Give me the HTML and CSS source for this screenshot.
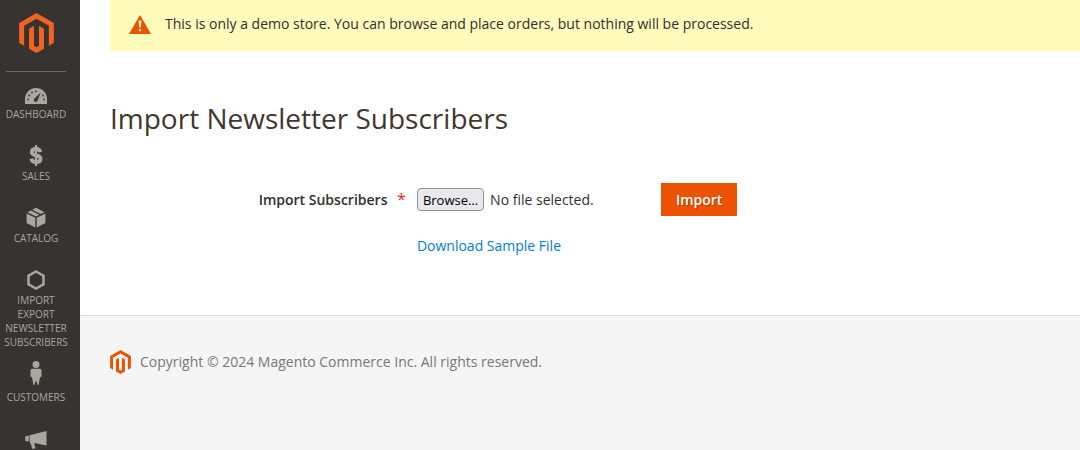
FILE: index.html
```html
<!DOCTYPE html>
<html lang="en">
<head>
  <meta charset="UTF-8">
  <meta name="viewport" content="width=device-width, initial-scale=1.0">
  <title>Import Newsletter Subscribers / Magento Admin</title>
  <link rel="stylesheet" href="styles.css">
</head>
<body>
  <!-- Sidebar -->
  <aside class="sidebar">
    <a class="logo" href="#" aria-label="Magento Admin Panel">
      <svg width="35" height="40" viewBox="1.6 0 20.8 24"><path d="M12 24l-4.455-2.572v-12l2.97-1.715v12.001l1.485.902 1.485-.902V7.713l2.971 1.715v12L12 24zM22.391 6v12l-2.969 1.714V7.713L12 3.43 4.574 7.713v12.001L1.609 18V6L12 0l10.391 6z"/></svg>
    </a>
    <nav class="menu">
      <a class="menu-item" href="#">
        <span class="menu-icon">
          <svg width="22" height="16" viewBox="0 0 22 16">
            <path d="M0 16V11a11 11 0 0 1 22 0v5z"/>
            <g class="cut"><path d="M15.8 4.2l-3.2 8.100a1.900 1.900 0 1 1-2.700-2.100z"/><circle cx="3" cy="11.500" r=".9"/><circle cx="4.200" cy="7.500" r=".9"/><circle cx="7" cy="4.500" r=".9"/><circle cx="11" cy="3.300" r=".9"/><circle cx="18" cy="7.500" r=".9"/><circle cx="19" cy="11.500" r=".9"/></g>
          </svg>
        </span>
        <span>Dashboard</span>
      </a>
      <a class="menu-item" href="#">
        <span class="menu-icon">
          <svg width="14" height="21" viewBox="0 0 14 22"><path class="stroke" d="M11.500 7.500C11 5.200 9.200 4.200 7 4.200c-2.600 0-4.400 1.300-4.400 3.300C2.600 12 11.800 9.700 11.800 14.300c0 2.100-1.800 3.500-4.700 3.500-2.700 0-4.600-1.200-5.100-3.600"/><path d="M5.800 0h2.400v22H5.800z"/></svg>
        </span>
        <span>Sales</span>
      </a>
      <a class="menu-item" href="#">
        <span class="menu-icon">
          <svg width="20" height="21" viewBox="0 0 20 21"><path d="M.6 6.500l8.700 4.200v9.800L.6 16zM19.400 6.500v9.500l-8.700 4.500v-9.800zM1.500 5.200l3.300-1.700 8.600 4.200L10 9.400zM6.300 2.700L10 .8l8.500 4.400-3.600 1.800z"/></svg>
        </span>
        <span>Catalog</span>
      </a>
      <a class="menu-item" href="#">
        <span class="menu-icon">
          <svg width="18" height="20" viewBox="0 0 18 20"><path class="hexagon" d="M9 1.500l7.500 4.200v8.600L9 18.500l-7.500-4.200V5.700z"/></svg>
        </span>
        <span>Import Export Newsletter Subscribers</span>
      </a>
      <a class="menu-item" href="#">
        <span class="menu-icon">
          <svg class="tall" width="12" height="24" viewBox="0 0 12 24"><circle cx="6" cy="3.500" r="3.500"/><path d="M2.500 7.700h7c1.300 0 2 .8 2 2v5.600l-1.600 1.400L8.600 24h-.8L6 19.500 4.200 24h-.8L2.100 16.700.5 15.300V9.700c0-1.200.7-2 2-2z"/></svg>
        </span>
        <span>Customers</span>
      </a>
      <a class="menu-item" href="#" aria-label="Marketing">
        <span class="menu-icon">
          <svg width="22" height="18" viewBox="0 0 22 18"><path d="M.3 5.300l3.400-.9v6.200L.3 10zM4.500 4.200L21.500 0v14.500L9.200 12l1.200 5.200-3 .8-2.200-6.500-.7-.2z"/></svg>
        </span>
      </a>
    </nav>
  </aside>

  <div class="page">
    <div class="message">
      <svg width="22" height="19" viewBox="0 0 22 19"><path class="triangle" d="M11 0l11 19H0z"/><path class="mark" d="M9.600 5.500h2.800l-.6 7h-1.600zM9.900 14h2.200v2.200H9.900z"/></svg>
      <span>This is only a demo store. You can browse and place orders, but nothing will be processed.</span>
    </div>

    <main class="content">
      <h1>Import Newsletter Subscribers</h1>

      <form class="import-form">
        <label class="field-label" for="import-file">Import Subscribers <span class="required">*</span></label>
        <div class="file-field">
          <input type="file" id="import-file" class="file-input" required>
          <button type="button" class="browse" id="browse">Browse…</button>
          <span id="file-name">No file selected.</span>
        </div>
        <button type="submit" class="import">Import</button>
        <a class="sample" href="#">Download Sample File</a>
      </form>
    </main>

    <footer class="footer">
      <div class="copyright">
        <svg width="21" height="24" viewBox="1.6 0 20.8 24"><path d="M12 24l-4.455-2.572v-12l2.97-1.715v12.001l1.485.902 1.485-.902V7.713l2.971 1.715v12L12 24zM22.391 6v12l-2.969 1.714V7.713L12 3.43 4.574 7.713v12.001L1.609 18V6L12 0l10.391 6z"/></svg>
        <span>Copyright © 2024 Magento Commerce Inc. All rights reserved.</span>
      </div>
    </footer>
  </div>

  <script>
    const fileInput = document.getElementById('import-file');

    document.getElementById('browse').onclick = () => fileInput.click();

    fileInput.onchange = () => {
      const file = fileInput.files[0];
      document.getElementById('file-name').textContent = file ? file.name : 'No file selected.';
    };
  </script>
</body>
</html>
```
FILE: styles.css
```css
* { box-sizing: border-box; }
body { display: flex; height: 100vh; margin: 0; font-family: "Open Sans", "Noto Sans", sans-serif; font-size: 14px; line-height: 20px; color: #303030; background: #fff; }
svg { display: block; flex: none; }
a { color: #007bdb; text-decoration: none; }
a:hover { text-decoration: underline; }

/* Sidebar */
.sidebar { flex: none; width: 80px; padding-right: 8px; overflow: hidden; background: #373330; }
.logo { display: flex; justify-content: center; height: 72px; margin: 0 6px; padding-top: 13px; border-bottom: 1px solid #736963; }
.logo svg { fill: #f26322; }
.menu { padding-top: 2px; }
.menu-item { display: block; min-height: 62px; padding: 10px 0 8px; font-size: 10px; line-height: 14px; text-align: center; text-transform: uppercase; color: #aaa6a0; }
.menu-item:hover { color: #fff; text-decoration: none; }
.menu-icon { display: flex; align-items: flex-end; justify-content: center; height: 20px; margin-bottom: 3px; }
.menu-icon svg { fill: currentColor; }
.menu-icon .tall { margin-bottom: 2px; }
.menu-icon .cut { fill: #373330; }
.menu-icon .stroke { fill: none; stroke: currentColor; stroke-width: 4; }
.menu-icon .hexagon { fill: none; stroke: currentColor; stroke-width: 2.5; }

/* Page */
.page { flex: 1; display: flex; flex-direction: column; min-width: 0; overflow: auto; }
.message { display: flex; align-items: center; gap: 14px; margin-left: 30px; padding: 14px 19px 17px; background: #fffbbb; }
.message .triangle { fill: #eb5202; }
.message .mark { fill: #fffbbb; }
.content { padding: 47px 40px 59px 30px; }
h1 { margin: 0 0 45px; font-size: 28px; font-weight: 400; line-height: 40px; color: #41362f; }

/* Import form */
.import-form { display: grid; grid-template-columns: 33% 244px auto; justify-content: start; align-items: center; row-gap: 20px; }
.field-label { padding-right: 11px; font-weight: 600; text-align: right; }
.required { margin-left: 6px; font-size: 16px; font-weight: 400; color: #e22626; }
.file-field { position: relative; display: flex; align-items: center; gap: 6px; }
.file-input { position: absolute; width: 1px; height: 1px; opacity: 0; }
.browse { height: 23px; padding: 0 5px; font: inherit; font-size: 13px; color: #000; background: #e9e9ed; border: 1px solid #8f8f9d; border-radius: 4px; }
.import { height: 33px; padding: 0 15px; font: inherit; font-weight: 600; color: #fff; text-shadow: 1px 1px 0 rgba(0, 0, 0, 0.25); background: #eb5202; border: none; cursor: pointer; }
.import:hover { background: #ba4000; }
.sample { grid-column: 2; }

/* Footer */
.footer { flex: 1; padding: 34px 30px; color: #777; background: #f5f5f5; border-top: 1px solid #d9d9d9; }
.footer svg { fill: #eb5202; }
.copyright { display: flex; align-items: center; gap: 9px; }
```
